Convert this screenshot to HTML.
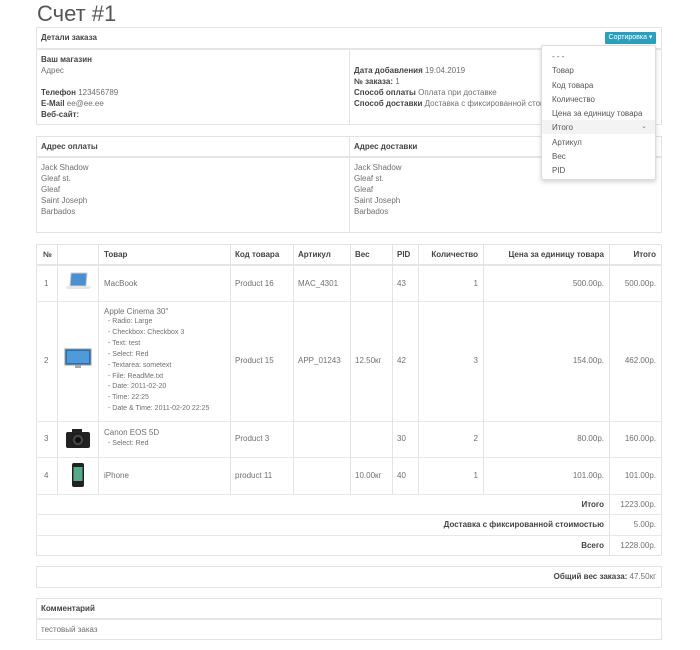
<!DOCTYPE html>
<html><head><meta charset="utf-8"><style>
*{box-sizing:border-box;margin:0;padding:0}
body{width:700px;height:650px;background:#fff;font-family:"Liberation Sans","Noto Sans CJK SC",sans-serif;font-size:8px;color:#707070;position:relative;overflow:hidden}
.a{position:absolute}
b{color:#444}
.box{position:absolute;border:1px solid #e3e3e3}
.hl{position:absolute;height:1px;background:#ddd}
.vl{position:absolute;width:1px;background:#e3e3e3}
.t{position:absolute;white-space:nowrap;line-height:11px}
.r{text-align:right}
.sm{font-size:7px}
</style></head><body>
<div class="t" style="left:37px;top:2px;font-size:22px;line-height:24px;color:#555">Счет #1</div>

<div class="box" style="left:36px;top:27px;width:626px;height:98px"></div>
<div class="hl" style="left:36px;top:48px;width:626px;height:2px;background:#e6e6e6"></div>
<div class="vl" style="left:349px;top:49px;height:75px"></div>
<div class="t" style="left:41px;top:32px"><b>Детали заказа</b></div>
<div class="a" style="left:605px;top:32px;width:51px;height:12px;background:#2a9fbd;color:#fff;font-size:7px;line-height:12px;text-align:center;border-radius:1px">Сортировка ▾</div>
<div class="t" style="left:41px;top:54px"><b>Ваш магазин</b><br>Адрес<br><br><b>Телефон</b> 123456789<br><b>E-Mail</b> ee@ee.ee<br><b>Веб-сайт:</b></div>
<div class="t" style="left:354px;top:65px"><b>Дата добавления</b> 19.04.2019<br><b>№ заказа:</b> 1<br><b>Способ оплаты</b> Оплата при доставке<br><b>Способ доставки</b> Доставка с фиксированной стоимостью</div>

<div class="box" style="left:36px;top:136px;width:626px;height:97px"></div>
<div class="hl" style="left:36px;top:156px;width:626px;height:2px;background:#e6e6e6"></div>
<div class="vl" style="left:349px;top:136px;height:96px"></div>
<div class="t" style="left:41px;top:141px"><b>Адрес оплаты</b></div>
<div class="t" style="left:354px;top:141px"><b>Адрес доставки</b></div>
<div class="t" style="left:41px;top:162px">Jack Shadow<br>Gleaf st.<br>Gleaf<br>Saint Joseph<br>Barbados</div>
<div class="t" style="left:354px;top:162px">Jack Shadow<br>Gleaf st.<br>Gleaf<br>Saint Joseph<br>Barbados</div>

<div class="a" style="left:541px;top:45px;width:115px;height:135px;background:#fff;border:1px solid #ddd;box-shadow:0 2px 5px rgba(0,0,0,.18);border-radius:2px"></div>
<div class="a" style="left:542px;top:120px;width:113px;height:14px;background:#f3f3f3"></div>
<div class="t" style="left:552px;top:50px;line-height:14.3px;color:#555">- - -<br>Товар<br>Код товара<br>Количество<br>Цена за единицу товара<br>Итого<br>Артикул<br>Вес<br>PID</div>
<div class="t" style="left:641px;top:121px;font-size:7px;color:#777">⌄</div>

<div class="box" style="left:36px;top:244px;width:626px;height:312px"></div>
<div class="hl" style="left:36px;top:264px;width:626px;height:2px;background:#e6e6e6"></div>
<div class="hl" style="left:36px;top:301px;width:626px;background:#e8e8e8"></div>
<div class="hl" style="left:36px;top:421px;width:626px;background:#e8e8e8"></div>
<div class="hl" style="left:36px;top:457px;width:626px;background:#e8e8e8"></div>
<div class="hl" style="left:36px;top:494px;width:626px;background:#e8e8e8"></div>
<div class="hl" style="left:36px;top:514px;width:626px;background:#e8e8e8"></div>
<div class="hl" style="left:36px;top:535px;width:626px;background:#e8e8e8"></div>
<div class="vl" style="left:57px;top:244px;height:250px"></div>
<div class="vl" style="left:98px;top:244px;height:250px"></div>
<div class="vl" style="left:230px;top:244px;height:250px"></div>
<div class="vl" style="left:293px;top:244px;height:250px"></div>
<div class="vl" style="left:350px;top:244px;height:250px"></div>
<div class="vl" style="left:392px;top:244px;height:250px"></div>
<div class="vl" style="left:418px;top:244px;height:250px"></div>
<div class="vl" style="left:483px;top:244px;height:250px"></div>
<div class="vl" style="left:609px;top:244px;height:312px"></div>

<div class="t" style="left:43px;top:249px"><b>№</b></div>
<div class="t" style="left:104px;top:249px"><b>Товар</b></div>
<div class="t" style="left:235px;top:249px"><b>Код товара</b></div>
<div class="t" style="left:298px;top:249px"><b>Артикул</b></div>
<div class="t" style="left:355px;top:249px"><b>Вес</b></div>
<div class="t" style="left:397px;top:249px"><b>PID</b></div>
<div class="t r" style="left:420px;width:58px;top:249px"><b>Количество</b></div>
<div class="t r" style="left:485px;width:119px;top:249px"><b>Цена за единицу товара</b></div>
<div class="t r" style="left:611px;width:45px;top:249px"><b>Итого</b></div>

<div class="t" style="left:44px;top:278px">1</div>
<svg class="a" style="left:64px;top:272px" width="28" height="18"><path d="M7 1h16l-1 13H6z" fill="#4a90d0" stroke="#ccc"/><path d="M2 14h26l-3 3H3z" fill="#e6e6e6"/></svg>
<div class="t" style="left:104px;top:278px">MacBook</div>
<div class="t" style="left:235px;top:278px">Product 16</div>
<div class="t" style="left:298px;top:278px">MAC_4301</div>
<div class="t" style="left:397px;top:278px">43</div>
<div class="t r" style="left:420px;width:58px;top:278px">1</div>
<div class="t r" style="left:485px;width:119px;top:278px">500.00р.</div>
<div class="t r" style="left:611px;width:45px;top:278px">500.00р.</div>

<div class="t" style="left:44px;top:355px">2</div>
<svg class="a" style="left:64px;top:348px" width="28" height="22"><rect x="1" y="1" width="26" height="16" fill="#2c6fb0" stroke="#999"/><rect x="3" y="3" width="22" height="12" fill="#4f9ad8"/><rect x="11" y="17" width="6" height="3" fill="#aaa"/></svg>
<div class="t" style="left:104px;top:306px">Apple Cinema 30"</div>
<div class="t sm" style="left:108px;top:317px;line-height:10.9px">- Radio: Large<br>- Checkbox: Checkbox 3<br>- Text: test<br>- Select: Red<br>- Textarea: sometext<br>- File: ReadMe.txt<br>- Date: 2011-02-20<br>- Time: 22:25<br>- Date &amp; Time: 2011-02-20 22:25</div>
<div class="t" style="left:235px;top:355px">Product 15</div>
<div class="t" style="left:298px;top:355px">APP_01243</div>
<div class="t" style="left:355px;top:355px">12.50кг</div>
<div class="t" style="left:397px;top:355px">42</div>
<div class="t r" style="left:420px;width:58px;top:355px">3</div>
<div class="t r" style="left:485px;width:119px;top:355px">154.00р.</div>
<div class="t r" style="left:611px;width:45px;top:355px">462.00р.</div>

<div class="t" style="left:44px;top:433px">3</div>
<svg class="a" style="left:64px;top:428px" width="28" height="22"><rect x="2" y="4" width="24" height="16" rx="2" fill="#222"/><rect x="8" y="1" width="10" height="4" fill="#222"/><circle cx="14" cy="12" r="6" fill="#444" stroke="#111"/><circle cx="14" cy="12" r="3" fill="#111"/></svg>
<div class="t" style="left:104px;top:427px">Canon EOS 5D</div>
<div class="t sm" style="left:108px;top:438px">- Select: Red</div>
<div class="t" style="left:235px;top:433px">Product 3</div>
<div class="t" style="left:397px;top:433px">30</div>
<div class="t r" style="left:420px;width:58px;top:433px">2</div>
<div class="t r" style="left:485px;width:119px;top:433px">80.00р.</div>
<div class="t r" style="left:611px;width:45px;top:433px">160.00р.</div>

<div class="t" style="left:44px;top:470px">4</div>
<svg class="a" style="left:71px;top:462px" width="14" height="26"><rect x="1" y="1" width="12" height="24" rx="2" fill="#222"/><rect x="2.5" y="5" width="9" height="14" fill="#5a8"/></svg>
<div class="t" style="left:104px;top:470px">iPhone</div>
<div class="t" style="left:235px;top:470px">product 11</div>
<div class="t" style="left:355px;top:470px">10.00кг</div>
<div class="t" style="left:397px;top:470px">40</div>
<div class="t r" style="left:420px;width:58px;top:470px">1</div>
<div class="t r" style="left:485px;width:119px;top:470px">101.00р.</div>
<div class="t r" style="left:611px;width:45px;top:470px">101.00р.</div>

<div class="t r" style="left:300px;width:304px;top:499px"><b>Итого</b></div>
<div class="t r" style="left:611px;width:45px;top:499px">1223.00р.</div>
<div class="t r" style="left:300px;width:304px;top:519px"><b>Доставка с фиксированной стоимостью</b></div>
<div class="t r" style="left:611px;width:45px;top:519px">5.00р.</div>
<div class="t r" style="left:300px;width:304px;top:540px"><b>Всего</b></div>
<div class="t r" style="left:611px;width:45px;top:540px">1228.00р.</div>

<div class="box" style="left:36px;top:566px;width:626px;height:22px"></div>
<div class="t r" style="left:300px;width:356px;top:571px"><b>Общий вес заказа:</b> 47.50кг</div>

<div class="box" style="left:36px;top:598px;width:626px;height:42px"></div>
<div class="hl" style="left:36px;top:618px;width:626px;height:2px;background:#e6e6e6"></div>
<div class="t" style="left:41px;top:603px"><b>Комментарий</b></div>
<div class="t" style="left:41px;top:624px">тестовый заказ</div>
</body></html>
